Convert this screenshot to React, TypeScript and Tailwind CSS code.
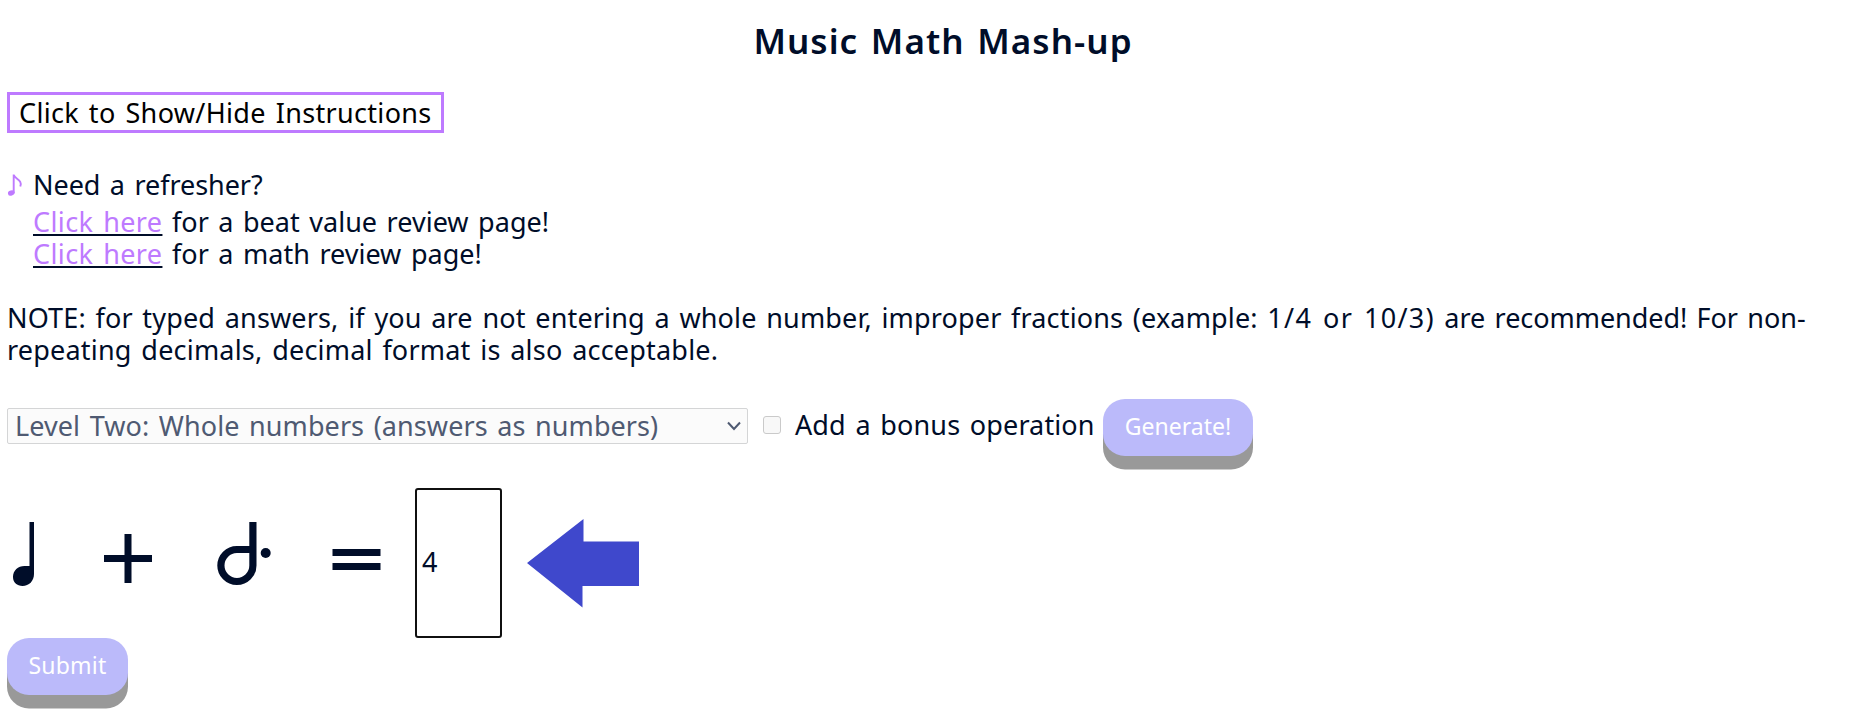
import React from "react";

function Line({ children, className }: { children: React.ReactNode; className: string }) {
  return <div className={`whitespace-nowrap ${className}`}>{children}</div>;
}

function ReviewLink() {
  return (
    <a href="#" className="tracking-[0.380px] text-[#be7aff] underline decoration-[#000d29] decoration-2 underline-offset-2">Click here</a>
  );
}

export default function App() {
  return (
    <main className="h-[724px] w-full overflow-hidden bg-white px-[7px] pt-[20px] font-['Noto_Sans',sans-serif] text-[27px] leading-8 text-[#000d29] [word-spacing:2.5px]">
      <h1 className="pl-[37px] text-center text-[35px] font-semibold leading-[42px] tracking-[1.050px]">Music Math Mash-up</h1>
      <button className="mt-[30px] flex h-[41px] w-[437px] items-center whitespace-nowrap border-[3px] border-[#be7aff] pl-[9px] tracking-[0.330px] text-black [word-spacing:2.5px]">
        Click to Show/Hide Instructions
      </button>
      <div className="mt-[36px] flex h-[37px]">
        <svg className="mr-[10px] h-8 w-[16px] shrink-0" viewBox="0 0 16 32">
          <ellipse cx="4.300" cy="24" rx="3.400" ry="2.600" fill="#be7aff" transform="rotate(-15 4.300 24)" />
          <path d="M6.700 24V5.500C7.200 10 16 10.500 13.300 17.500" fill="none" stroke="#be7aff" strokeWidth="1.900" />
        </svg>
        <Line className="tracking-[-0.050px]">Need a refresher?</Line>
      </div>
      <div className="pl-[26px] tracking-[0.010px]">
        <Line className="h-8"><ReviewLink /> for a beat value review page!</Line>
        <Line className="h-8"><ReviewLink /> for a math review page!</Line>
      </div>
      <div className="mt-8 h-16 whitespace-nowrap">
        <p>
          <span className="tracking-[0.150px]">NOTE: for typed answers, if you are not entering a whole number, improper fractions (example: </span>
          <span className="tracking-[1.300px]">1/4 or 10/3)</span>
          <span className="tracking-[-0.060px]"> are recommended! For non-</span>
        </p>
        <p className="tracking-[0.200px]">repeating decimals, decimal format is also acceptable.</p>
      </div>
      <div className="mt-[33px] flex h-[70px]">
        <div className="mt-[9px] flex h-[36px] w-[741px] shrink-0 items-center justify-between rounded-[2px] border border-[#d4d5d6] bg-[#fbfbfb] pl-[7px] pr-[6px] tracking-[0.070px] text-[#4f5a72]">
          <span className="whitespace-nowrap">Level Two: Whole numbers (answers as numbers)</span>
          <svg className="h-[10px] w-[14px]" viewBox="0 0 14 10"><path d="M1 1.500 7 8 13 1.500" fill="none" stroke="currentColor" strokeWidth="2" /></svg>
        </div>
        <div className="ml-[15px] mt-[17px] size-[18px] shrink-0 rounded-[3px] border border-[#cacaca] bg-[#f8f8f8]" />
        <Line className="ml-[14px] mt-[10px] w-[308px] shrink-0 tracking-[0.120px]">Add a bonus operation</Line>
        <button className="flex h-[57px] w-[150px] shrink-0 items-center justify-center rounded-[22px] bg-[#bbbafa] pb-[3px] text-[23px] text-white shadow-[0_13.5px_0_#999]">Generate!</button>
      </div>
      <div className="mt-[18px] flex h-[151px]">
        <svg className="h-[151px] w-[400px] shrink-0" viewBox="7 487 400 151" fill="#000d29">
          <path d="M29.500 522h4.500v52c0 7-5 12-11.500 12-5.500 0-9.500-3.700-9.500-9 0-6.500 5-11 11.500-11h5z" />
          <path d="M104 555h20.500v-21h7v21H152v7h-20.500v21h-7v-21H104zM332.500 549h48v7h-48zM332.500 563h48v7h-48z" />
          <path d="M252.900 522v43.500a16 16 0 1 1-16-16h16" fill="none" stroke="#000d29" strokeWidth="7.200" />
          <circle cx="265.700" cy="553" r="5" />
        </svg>
        <div className="ml-[8px] mt-px flex h-[150px] w-[87px] shrink-0 items-center rounded-[3px] border-2 border-[#101010] pb-[2px] pl-[5px]">4</div>
        <svg className="ml-[25px] h-[151px] w-[113px] shrink-0" viewBox="527 487 113 151" fill="#3f48cc">
          <path d="M527 563 583.500 519V541.500H639V586H582.500V607.500z" />
        </svg>
      </div>
      <button className="flex h-[57px] w-[121px] items-center justify-center rounded-[22px] bg-[#bbbafa] pb-[3px] text-[23px] tracking-[0.200px] text-white shadow-[0_13.5px_0_#999]">Submit</button>
    </main>
  );
}
